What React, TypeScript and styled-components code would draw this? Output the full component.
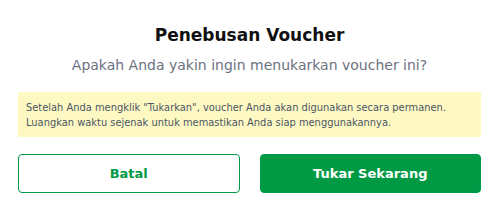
import React from 'react';
import styled, { createGlobalStyle } from 'styled-components';

const GlobalStyle = createGlobalStyle`
  html, body {
    margin: 0;
    padding: 0;
    background: #fff;
  }
  body {
    font-family: 'DejaVu Sans', 'Noto Sans', sans-serif;
  }
`;

const Card = styled.div`
  width: 499px;
  height: 213px;
  box-sizing: border-box;
  padding: 23px 18px 0 18px;
  background: #fff;
  display: flex;
  flex-direction: column;
  align-items: stretch;
`;

const Title = styled.h2`
  margin: 0;
  text-align: center;
  font-size: 17px;
  font-weight: 700;
  line-height: 24px;
  color: #111;
`;

const Subtitle = styled.p`
  margin: 7px 0 0 0;
  text-align: center;
  font-size: 14px;
  line-height: 22px;
  color: #6b7280;
`;

const Notice = styled.div`
  margin-top: 16px;
  height: 45px;
  box-sizing: border-box;
  background: #fef9c3;
  padding: 8px 8px 7px 8px;
  font-size: 9.9px;
  line-height: 15px;
  color: #4b5563;
`;

const Actions = styled.div`
  margin-top: 17px;
  display: grid;
  grid-template-columns: 1fr 1fr;
  gap: 20px;
`;

const Button = styled.button<{ $primary?: boolean }>`
  height: 39px;
  border-radius: 4px;
  font-family: inherit;
  font-size: 13px;
  font-weight: 600;
  cursor: pointer;
  border: 1px solid #009a44;
  background: ${(p) => (p.$primary ? '#009a44' : '#fff')};
  color: ${(p) => (p.$primary ? '#fff' : '#009a44')};
`;

export default function App() {
  return (
    <>
      <GlobalStyle />
      <Card>
        <Title>Penebusan Voucher</Title>
        <Subtitle>Apakah Anda yakin ingin menukarkan voucher ini?</Subtitle>
        <Notice>
          Setelah Anda mengklik "Tukarkan", voucher Anda akan digunakan secara permanen.
          <br />
          Luangkan waktu sejenak untuk memastikan Anda siap menggunakannya.
        </Notice>
        <Actions>
          <Button>Batal</Button>
          <Button $primary>Tukar Sekarang</Button>
        </Actions>
      </Card>
    </>
  );
}
